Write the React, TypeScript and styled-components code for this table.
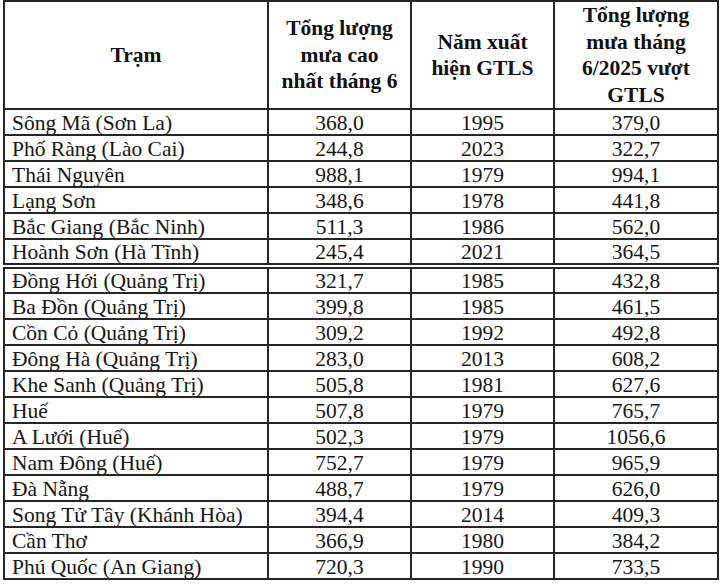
import React from "react";
import styled, { createGlobalStyle } from "styled-components";

const Global = createGlobalStyle`
  html, body { margin: 0; padding: 0; background: #ffffff; }
  body { font-family: "Liberation Serif", "DejaVu Serif", serif; color: #141414; }
`;

const Page = styled.div`
  width: 720px;
  height: 587px;
  padding: 0 0 0 3px;
  box-sizing: border-box;
  background: #fff;
  overflow: hidden;
`;

const Table = styled.table`
  border-collapse: collapse;
  width: 714px;
  table-layout: fixed;
  border: 2px solid #262626;
  font-family: "Liberation Serif", "DejaVu Serif", serif;
`;

const Col = styled.col<{ $w: number }>`
  width: ${(p) => p.$w}px;
`;

const HeadCell = styled.th`
  height: 106px;
  padding: 0;
  border: 2px solid #262626;
  font-family: "Liberation Serif", "DejaVu Serif", serif;
  font-weight: 700;
  font-size: 21.5px;
  line-height: 26.5px;
  text-align: center;
  vertical-align: middle;
  color: #111;
`;

const Row = styled.tr<{ $split?: boolean }>`
  height: 26px;
  & > td {
    border-bottom: ${(p) => (p.$split ? "6px double #262626" : "2px solid #262626")};
  }
`;

const Cell = styled.td<{ $left?: boolean }>`
  border-left: 2px solid #262626;
  border-right: 2px solid #262626;
  padding: 1px 0 0 ${(p) => (p.$left ? "7px" : "0")};
  font-family: "Liberation Serif", "DejaVu Serif", serif;
  font-size: 21.5px;
  line-height: 22px;
  text-align: ${(p) => (p.$left ? "left" : "center")};
  vertical-align: middle;
  white-space: nowrap;
  overflow: hidden;
  color: #161616;
`;

const rows: [string, string, string, string][] = [
  ["Sông Mã (Sơn La)", "368,0", "1995", "379,0"],
  ["Phố Ràng (Lào Cai)", "244,8", "2023", "322,7"],
  ["Thái Nguyên", "988,1", "1979", "994,1"],
  ["Lạng Sơn", "348,6", "1978", "441,8"],
  ["Bắc Giang (Bắc Ninh)", "511,3", "1986", "562,0"],
  ["Hoành Sơn (Hà Tĩnh)", "245,4", "2021", "364,5"],
  ["Đồng Hới (Quảng Trị)", "321,7", "1985", "432,8"],
  ["Ba Đồn (Quảng Trị)", "399,8", "1985", "461,5"],
  ["Cồn Cỏ (Quảng Trị)", "309,2", "1992", "492,8"],
  ["Đông Hà (Quảng Trị)", "283,0", "2013", "608,2"],
  ["Khe Sanh (Quảng Trị)", "505,8", "1981", "627,6"],
  ["Huế", "507,8", "1979", "765,7"],
  ["A Lưới (Huế)", "502,3", "1979", "1056,6"],
  ["Nam Đông (Huế)", "752,7", "1979", "965,9"],
  ["Đà Nẵng", "488,7", "1979", "626,0"],
  ["Song Tử Tây (Khánh Hòa)", "394,4", "2014", "409,3"],
  ["Cần Thơ", "366,9", "1980", "384,2"],
  ["Phú Quốc (An Giang)", "720,3", "1990", "733,5"],
];

export default function App() {
  return (
    <Page>
      <Global />
      <Table>
        <colgroup>
          <Col $w={264} />
          <Col $w={143} />
          <Col $w={143} />
          <Col $w={164} />
        </colgroup>
        <thead>
          <tr>
            <HeadCell>Trạm</HeadCell>
            <HeadCell>
              Tổng lượng
              <br />
              mưa cao
              <br />
              nhất tháng 6
            </HeadCell>
            <HeadCell>
              Năm xuất
              <br />
              hiện GTLS
            </HeadCell>
            <HeadCell>
              Tổng lượng
              <br />
              mưa tháng
              <br />
              6/2025 vượt
              <br />
              GTLS
            </HeadCell>
          </tr>
        </thead>
        <tbody>
          {rows.map((r, i) => (
            <Row key={r[0]} $split={i === 5}>
              <Cell $left>{r[0]}</Cell>
              <Cell>{r[1]}</Cell>
              <Cell>{r[2]}</Cell>
              <Cell>{r[3]}</Cell>
            </Row>
          ))}
        </tbody>
      </Table>
    </Page>
  );
}
